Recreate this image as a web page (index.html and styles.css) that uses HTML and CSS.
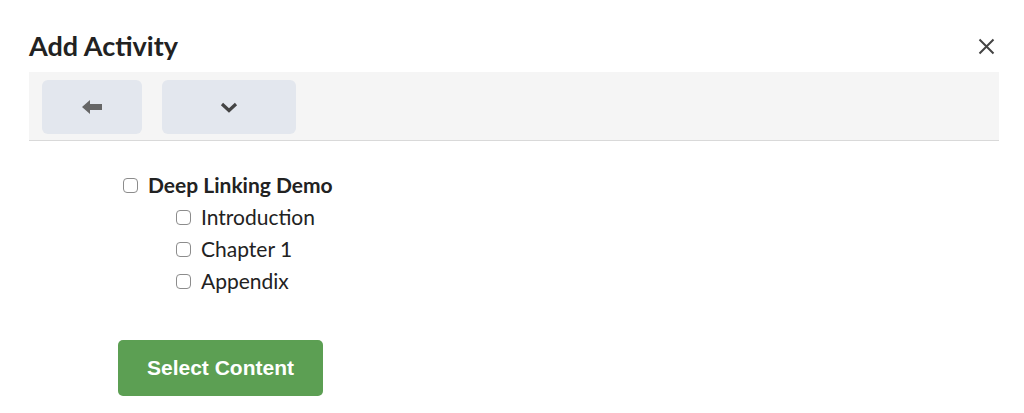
FILE: index.html
```html
<!DOCTYPE html>
<html>
<head>
    <title>Add Activity</title>
    <link rel="stylesheet" href="styles.css">
</head>
<body>
    <div class="dialog">
        <div class="header">
            <h2>Add Activity</h2>
            <button class="close" aria-label="Close">
                <svg width="17" height="17" viewBox="0 0 17 17"><path d="M1.5 1.5 L15.5 15.5 M15.5 1.5 L1.5 15.5" stroke="#444" stroke-width="2" fill="none"/></svg>
            </button>
        </div>
        <div class="toolbar">
            <button class="tool back" aria-label="Back">
                <svg width="20" height="14" viewBox="0 0 20 14"><path d="M0 7 L8 0 L8 4 L20 4 L20 10 L8 10 L8 14 Z" fill="#666"/></svg>
            </button>
            <button class="tool expand" aria-label="Expand">
                <svg width="18" height="11" viewBox="0 0 18 11"><path d="M2 2 L9 8.5 L16 2" stroke="#444" stroke-width="3.2" fill="none"/></svg>
            </button>
        </div>
        <ul class="tree">
            <li class="parent">
                <label><input type="checkbox"> Deep Linking Demo</label>
                <ul>
                    <li><label><input type="checkbox"> Introduction</label></li>
                    <li><label><input type="checkbox"> Chapter 1</label></li>
                    <li><label><input type="checkbox"> Appendix</label></li>
                </ul>
            </li>
        </ul>
        <div class="actions">
            <button class="submit">Select Content</button>
        </div>
    </div>
</body>
</html>
```

FILE: styles.css
```css
body {
    margin: 0;
    background: #fff;
    font-family: Lato, "Noto Sans", sans-serif;
    color: #222;
}
.dialog {
    padding: 0 25px 0 29px;
}
.header {
    display: flex;
    align-items: flex-start;
    justify-content: space-between;
    height: 72px;
}
.header h2 {
    margin: 0;
    padding-top: 30px;
    font-size: 27px;
    font-weight: 700;
    line-height: 32px;
}
.close {
    border: none;
    background: none;
    padding: 0;
    margin: 38px 4px 0 0;
    display: flex;
    cursor: pointer;
}
.toolbar {
    display: flex;
    gap: 20px;
    height: 69px;
    padding: 8px 13px 0;
    box-sizing: border-box;
    background: #f5f5f5;
    border-bottom: 1px solid #d9d9d9;
}
.tool {
    height: 54px;
    border: none;
    border-radius: 6px;
    background: #e3e7ee;
    display: flex;
    align-items: center;
    justify-content: center;
}
.back {
    width: 100px;
}
.expand {
    width: 134px;
    padding-top: 2px;
}
.tree {
    list-style: none;
    margin: 0;
    padding: 28px 0 0 94px;
}
.tree ul {
    list-style: none;
    margin: 0;
    padding: 0 0 0 53px;
}
.tree li {
    font-size: 21px;
    line-height: 32px;
}
.tree label {
    display: flex;
    align-items: center;
    gap: 10px;
}
.tree input {
    appearance: none;
    margin: 0;
    width: 15px;
    height: 15px;
    border: 1px solid #8c8c8c;
    border-radius: 4px;
    background: #fff;
}
.parent > label {
    font-weight: 700;
}
.actions {
    padding: 43px 0 0 89px;
}
.submit {
    width: 205px;
    height: 56px;
    border: none;
    border-radius: 5px;
    background: #5c9f53;
    color: #fff;
    font-family: "Liberation Sans", Arial, sans-serif;
    font-weight: 700;
    font-size: 21px;
}
```
